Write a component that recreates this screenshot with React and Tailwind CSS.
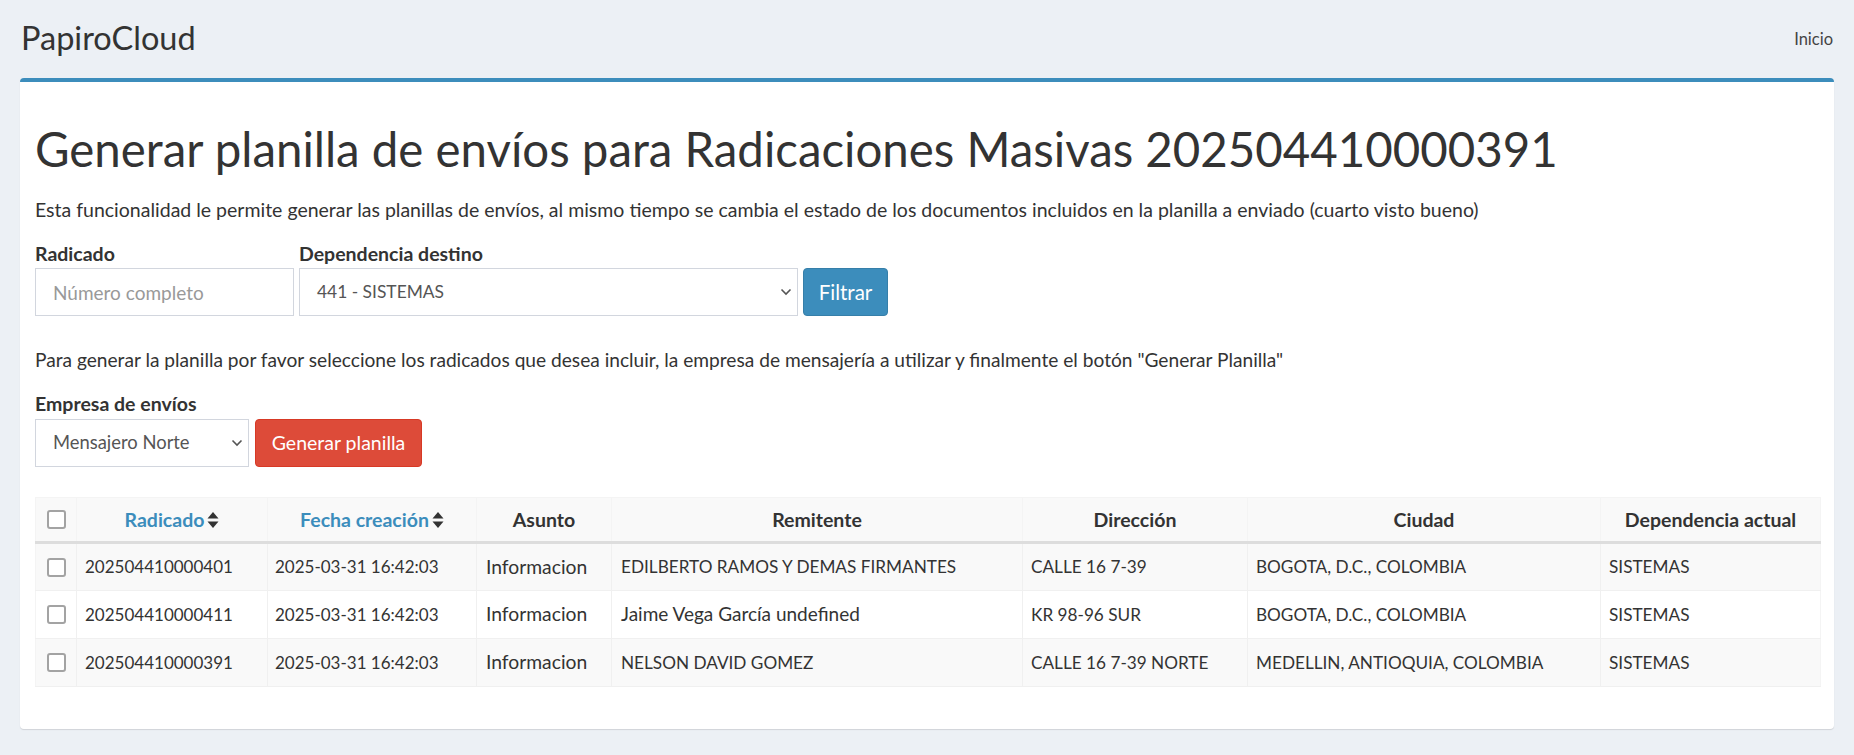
import React from "react";

const rows = [
  {
    radicado: "202504410000401",
    fecha: "2025-03-31 16:42:03",
    asunto: "Informacion",
    remitente: "EDILBERTO RAMOS Y DEMAS FIRMANTES",
    direccion: "CALLE 16 7-39",
    ciudad: "BOGOTA, D.C., COLOMBIA",
    dependencia: "SISTEMAS",
  },
  {
    radicado: "202504410000411",
    fecha: "2025-03-31 16:42:03",
    asunto: "Informacion",
    remitente: "Jaime Vega García undefined",
    direccion: "KR 98-96 SUR",
    ciudad: "BOGOTA, D.C., COLOMBIA",
    dependencia: "SISTEMAS",
  },
  {
    radicado: "202504410000391",
    fecha: "2025-03-31 16:42:03",
    asunto: "Informacion",
    remitente: "NELSON DAVID GOMEZ",
    direccion: "CALLE 16 7-39 NORTE",
    ciudad: "MEDELLIN, ANTIOQUIA, COLOMBIA",
    dependencia: "SISTEMAS",
  },
];

// nombres en mayúsculas se ven más anchos con Lato
const isUpper = (s) => s === s.toUpperCase();

const SortIcon = () => (
  <svg width="12" height="20" viewBox="0 0 12 20" className="ml-[3px] inline-block">
    <path d="M0.5 8.5 L6 2 L11.5 8.5 Z" fill="#333" />
    <path d="M0.5 11.5 L6 18 L11.5 11.5 Z" fill="#333" />
  </svg>
);

const Chevron = () => (
  <svg width="12" height="8" viewBox="0 0 12 8">
    <path d="M1.5 1.5 L6 6 L10.5 1.5" fill="none" stroke="#555" strokeWidth="1.6" />
  </svg>
);

const Checkbox = () => (
  <div className="w-[19px] h-[19px] rounded-[3px] border-2 border-[#a3a3a3] bg-white" />
);

const SelectBox = ({ value, className }) => (
  <div
    className={`h-[48px] border border-[#d2d6de] bg-white flex items-center justify-between pl-[17px] pr-[5px] text-[#555] ${className}`}
  >
    <span>{value}</span>
    <Chevron />
  </div>
);

export default function App() {
  return (
    <div
      className="min-h-[755px] bg-[#ecf0f5] text-[#333] text-[19.5px]"
      style={{ fontFamily: "Lato, 'Open Sans', sans-serif" }}
    >
      {/* navbar */}
      <div className="h-[78px] flex items-center justify-between pl-[21px] pr-[21px]">
        <span className="text-[32.5px] leading-none text-[#333] -mt-[2px]">PapiroCloud</span>
        <span className="text-[16.5px] text-[#444]">Inicio</span>
      </div>

      {/* box */}
      <div className="mx-[20px] bg-white border-t-4 border-[#3c8dbc] rounded-[4px] shadow-[0_1px_1px_rgba(0,0,0,0.12)] px-[15px] pt-[37px] pb-[42px]">
        <h1 className="text-[47.4px] leading-[60px] font-normal text-[#333]">
          Generar planilla de envíos para Radicaciones Masivas 202504410000391
        </h1>
        <p className="mt-[19px] leading-[24px]">
          Esta funcionalidad le permite generar las planillas de envíos, al mismo tiempo se cambia el estado de los documentos incluidos en la planilla a enviado (cuarto visto bueno)
        </p>

        <div className="mt-[20px] flex items-end gap-[5px]">
          <div className="flex flex-col w-[259px]">
            <label className="font-bold leading-[24px] mb-[2px]">Radicado</label>
            <input
              className="h-[48px] border border-[#d2d6de] px-[17px] text-[19px] outline-none placeholder:text-[#999]"
              placeholder="Número completo"
            />
          </div>
          <div className="flex flex-col w-[499px]">
            <label className="font-bold leading-[24px] mb-[2px]">Dependencia destino</label>
            <SelectBox value="441 - SISTEMAS" className="text-[17.4px]" />
          </div>
          <button className="h-[48px] w-[85px] bg-[#3c8dbc] border border-[#367fa9] rounded-[4px] text-white text-[20.5px]">
            Filtrar
          </button>
        </div>

        <p className="mt-[32px] leading-[24px] text-[19.15px]">
          Para generar la planilla por favor seleccione los radicados que desea incluir, la empresa de mensajería a utilizar y finalmente el botón "Generar Planilla"
        </p>

        <div className="mt-[20px] flex flex-col">
          <label className="font-bold leading-[24px] mb-[3px]">Empresa de envíos</label>
          <div className="flex gap-[6px]">
            <SelectBox value="Mensajero Norte" className="w-[214px] text-[18.4px]" />
            <button className="h-[48px] w-[167px] bg-[#dd4b39] border border-[#d73925] rounded-[4px] text-white">
              Generar planilla
            </button>
          </div>
        </div>

        <table className="mt-[30px] w-[1785px] table-fixed border-collapse border border-[#f4f4f4]">
          <colgroup>
            <col className="w-[41px]" />
            <col className="w-[191px]" />
            <col className="w-[209px]" />
            <col className="w-[135px]" />
            <col className="w-[411px]" />
            <col className="w-[225px]" />
            <col className="w-[353px]" />
            <col className="w-[220px]" />
          </colgroup>
          <thead>
            <tr className="bg-[#f9f9f9] h-[45px] border-b-[3px] border-[#ddd]">
              <th className="pl-[11px] border-r border-[#f4f4f4]">
                <Checkbox />
              </th>
              <th className="border-r border-[#f4f4f4] text-[#3c8dbc] font-bold">
                <span className="inline-flex items-center">
                  Radicado
                  <SortIcon />
                </span>
              </th>
              <th className="border-r border-[#f4f4f4] text-[#3c8dbc] font-bold">
                <span className="inline-flex items-center">
                  Fecha creación
                  <SortIcon />
                </span>
              </th>
              <th className="border-r border-[#f4f4f4] font-bold">Asunto</th>
              <th className="border-r border-[#f4f4f4] font-bold">Remitente</th>
              <th className="border-r border-[#f4f4f4] font-bold">Dirección</th>
              <th className="border-r border-[#f4f4f4] font-bold">Ciudad</th>
              <th className="font-bold">Dependencia actual</th>
            </tr>
          </thead>
          <tbody>
            {rows.map((r, i) => (
              <tr
                key={r.radicado}
                className={`h-[48px] border-b border-[#f0f0f0] ${i % 2 === 0 ? "bg-[#f9f9f9]" : "bg-white"}`}
              >
                <td className="pl-[11px] border-r border-[#f0f0f0]">
                  <Checkbox />
                </td>
                <td className="px-[8px] border-r border-[#f0f0f0] text-[17px]">{r.radicado}</td>
                <td className="px-[7px] border-r border-[#f0f0f0] text-[17px]">{r.fecha}</td>
                <td className="px-[9px] border-r border-[#f0f0f0] text-[19.3px]">{r.asunto}</td>
                <td
                  className={`px-[9px] border-r border-[#f0f0f0] ${isUpper(r.remitente) ? "text-[17.2px]" : "text-[19px]"}`}
                >
                  {r.remitente}
                </td>
                <td className="px-[8px] border-r border-[#f0f0f0] text-[17.2px]">{r.direccion}</td>
                <td className="px-[8px] border-r border-[#f0f0f0] text-[17.2px]">{r.ciudad}</td>
                <td className="px-[8px] text-[17.2px]">{r.dependencia}</td>
              </tr>
            ))}
          </tbody>
        </table>
      </div>
    </div>
  );
}
